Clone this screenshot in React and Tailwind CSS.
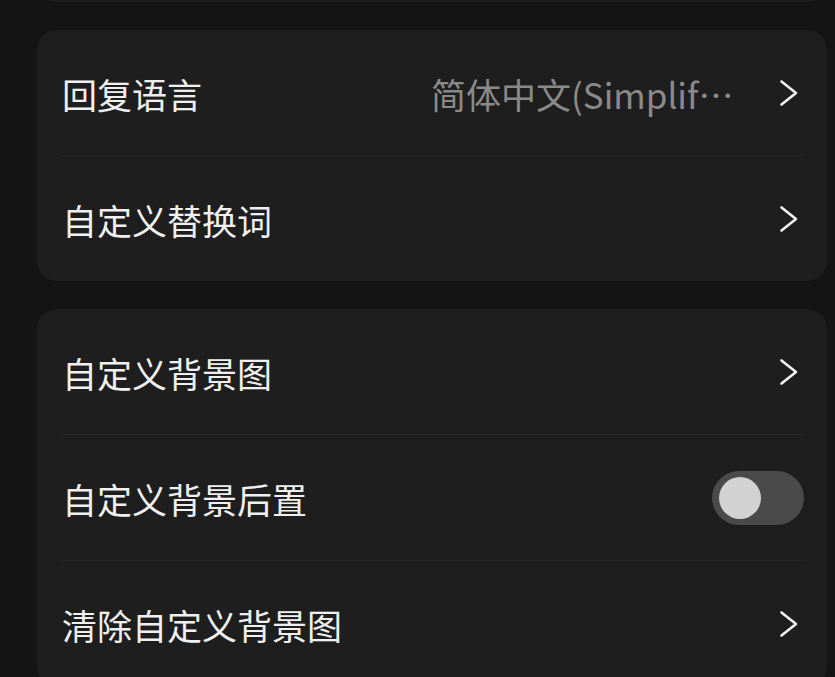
import React from "react";

const font = { fontFamily: '"Noto Sans CJK SC", "Noto Sans", sans-serif' };

function Chevron() {
  return (
    <svg width="20" height="28" viewBox="0 0 20 28" fill="none" className="shrink-0">
      <path d="M2.5 2.5 L17 14 L2.5 25.5" stroke="#f2f2f2" strokeWidth="2.6" strokeLinecap="round" strokeLinejoin="round" />
    </svg>
  );
}

function Row({ label, value, toggle }) {
  return (
    <div className="h-[125px] flex items-center pl-[25px] pr-[28px]">
      <div className="text-[35px] text-[#f0f0f0] leading-[50px] whitespace-nowrap pt-[2px]">{label}</div>
      <div className="flex-1" />
      {value && (
        <div className="w-[310px] text-[35px] text-[#8a8a8a] leading-[50px] whitespace-nowrap overflow-hidden text-ellipsis mr-[38px] pt-[2px] [font-variant-ligatures:none]">
          {value}
        </div>
      )}
      {toggle ? (
        <div className="w-[92px] h-[54px] rounded-full bg-[#4a4a4a] flex items-center pl-[7px] -mr-[5px]">
          <div className="w-[42px] h-[42px] rounded-full bg-[#d2d2d2]" />
        </div>
      ) : (
        <Chevron />
      )}
    </div>
  );
}

function Divider() {
  return <div className="h-px bg-[#282828] ml-[23px] mr-[24px]" />;
}

export default function App() {
  return (
    <div className="w-[835px] h-[677px] overflow-hidden bg-[#141414]" style={font}>
      <div className="px-[37px] pr-[8px] flex flex-col gap-[28px]">
        <div className="-mt-[40px] h-[42px] rounded-[20px] bg-[#1e1e1e]" />
        <div className="rounded-[20px] bg-[#1e1e1e]">
          <Row label="回复语言" value="简体中文(Simplified Chinese)" />
          <Divider />
          <Row label="自定义替换词" />
        </div>
        <div className="rounded-[20px] bg-[#1e1e1e]">
          <Row label="自定义背景图" />
          <Divider />
          <Row label="自定义背景后置" toggle />
          <Divider />
          <Row label="清除自定义背景图" />
        </div>
      </div>
    </div>
  );
}
